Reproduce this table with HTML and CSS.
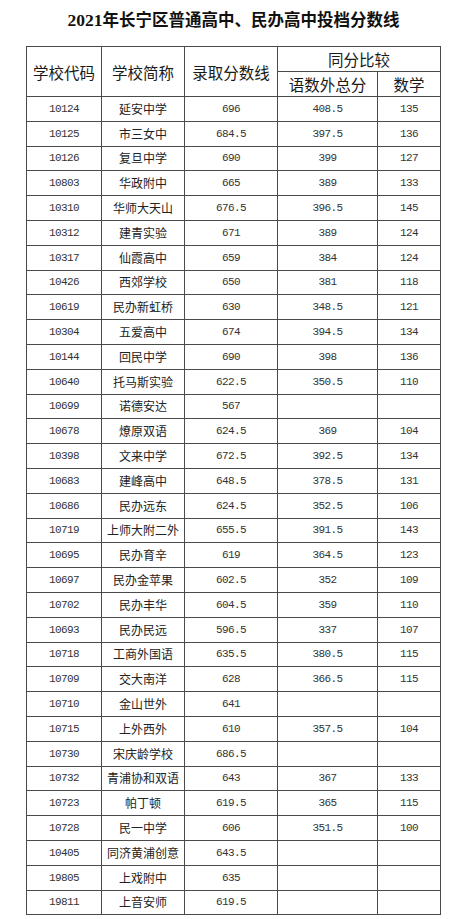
FILE: index.html
```html
<!DOCTYPE html>
<html lang="zh-CN">
<head>
<meta charset="utf-8">
<title>2021年长宁区普通高中、民办高中投档分数线</title>
<link rel="stylesheet" href="styles.css">
</head>
<body>
<div class="page">
  <h1 class="title"><span class="yr">2021</span>年长宁区普通高中、民办高中投档分数线</h1>
  <table class="scores">
    <colgroup>
      <col class="c1"><col class="c2"><col class="c3"><col class="c4"><col class="c5">
    </colgroup>
    <thead>
      <tr class="h1">
        <th rowspan="2">学校代码</th>
        <th rowspan="2">学校简称</th>
        <th rowspan="2">录取分数线</th>
        <th colspan="2">同分比较</th>
      </tr>
      <tr class="h2">
        <th>语数外总分</th>
        <th>数学</th>
      </tr>
    </thead>
    <tbody>
      <tr><td class="num">10124</td><td class="name">延安中学</td><td class="num">696</td><td class="num">408.5</td><td class="num">135</td></tr>
      <tr><td class="num">10125</td><td class="name">市三女中</td><td class="num">684.5</td><td class="num">397.5</td><td class="num">136</td></tr>
      <tr><td class="num">10126</td><td class="name">复旦中学</td><td class="num">690</td><td class="num">399</td><td class="num">127</td></tr>
      <tr><td class="num">10803</td><td class="name">华政附中</td><td class="num">665</td><td class="num">389</td><td class="num">133</td></tr>
      <tr><td class="num">10310</td><td class="name">华师大天山</td><td class="num">676.5</td><td class="num">396.5</td><td class="num">145</td></tr>
      <tr><td class="num">10312</td><td class="name">建青实验</td><td class="num">671</td><td class="num">389</td><td class="num">124</td></tr>
      <tr><td class="num">10317</td><td class="name">仙霞高中</td><td class="num">659</td><td class="num">384</td><td class="num">124</td></tr>
      <tr><td class="num">10426</td><td class="name">西郊学校</td><td class="num">650</td><td class="num">381</td><td class="num">118</td></tr>
      <tr><td class="num">10619</td><td class="name">民办新虹桥</td><td class="num">630</td><td class="num">348.5</td><td class="num">121</td></tr>
      <tr><td class="num">10304</td><td class="name">五爱高中</td><td class="num">674</td><td class="num">394.5</td><td class="num">134</td></tr>
      <tr><td class="num">10144</td><td class="name">回民中学</td><td class="num">690</td><td class="num">398</td><td class="num">136</td></tr>
      <tr><td class="num">10640</td><td class="name">托马斯实验</td><td class="num">622.5</td><td class="num">350.5</td><td class="num">110</td></tr>
      <tr><td class="num">10699</td><td class="name">诺德安达</td><td class="num">567</td><td class="num"></td><td class="num"></td></tr>
      <tr><td class="num">10678</td><td class="name">燎原双语</td><td class="num">624.5</td><td class="num">369</td><td class="num">104</td></tr>
      <tr><td class="num">10398</td><td class="name">文来中学</td><td class="num">672.5</td><td class="num">392.5</td><td class="num">134</td></tr>
      <tr><td class="num">10683</td><td class="name">建峰高中</td><td class="num">648.5</td><td class="num">378.5</td><td class="num">131</td></tr>
      <tr><td class="num">10686</td><td class="name">民办远东</td><td class="num">624.5</td><td class="num">352.5</td><td class="num">106</td></tr>
      <tr><td class="num">10719</td><td class="name">上师大附二外</td><td class="num">655.5</td><td class="num">391.5</td><td class="num">143</td></tr>
      <tr><td class="num">10695</td><td class="name">民办育辛</td><td class="num">619</td><td class="num">364.5</td><td class="num">123</td></tr>
      <tr><td class="num">10697</td><td class="name">民办金苹果</td><td class="num">602.5</td><td class="num">352</td><td class="num">109</td></tr>
      <tr><td class="num">10702</td><td class="name">民办丰华</td><td class="num">604.5</td><td class="num">359</td><td class="num">110</td></tr>
      <tr><td class="num">10693</td><td class="name">民办民远</td><td class="num">596.5</td><td class="num">337</td><td class="num">107</td></tr>
      <tr><td class="num">10718</td><td class="name">工商外国语</td><td class="num">635.5</td><td class="num">380.5</td><td class="num">115</td></tr>
      <tr><td class="num">10709</td><td class="name">交大南洋</td><td class="num">628</td><td class="num">366.5</td><td class="num">115</td></tr>
      <tr><td class="num">10710</td><td class="name">金山世外</td><td class="num">641</td><td class="num"></td><td class="num"></td></tr>
      <tr><td class="num">10715</td><td class="name">上外西外</td><td class="num">610</td><td class="num">357.5</td><td class="num">104</td></tr>
      <tr><td class="num">10730</td><td class="name">宋庆龄学校</td><td class="num">686.5</td><td class="num"></td><td class="num"></td></tr>
      <tr><td class="num">10732</td><td class="name">青浦协和双语</td><td class="num">643</td><td class="num">367</td><td class="num">133</td></tr>
      <tr><td class="num">10723</td><td class="name">帕丁顿</td><td class="num">619.5</td><td class="num">365</td><td class="num">115</td></tr>
      <tr><td class="num">10728</td><td class="name">民一中学</td><td class="num">606</td><td class="num">351.5</td><td class="num">100</td></tr>
      <tr><td class="num">10405</td><td class="name">同济黄浦创意</td><td class="num">643.5</td><td class="num"></td><td class="num"></td></tr>
      <tr><td class="num">19805</td><td class="name">上戏附中</td><td class="num">635</td><td class="num"></td><td class="num"></td></tr>
      <tr><td class="num">19811</td><td class="name">上音安师</td><td class="num">619.5</td><td class="num"></td><td class="num"></td></tr>
    </tbody>
  </table>
</div>
</body>
</html>
```

FILE: styles.css
```css
html, body {
  margin: 0;
  padding: 0;
  background: #ffffff;
}

.page {
  width: 415px;
  padding-left: 26px;
}

.title {
  margin: 0;
  height: 46px;
  padding-top: 10px;
  box-sizing: border-box;
  text-align: center;
  font-family: "Liberation Serif", "Noto Sans CJK SC", serif;
  font-size: 16.5px;
  line-height: 20px;
  font-weight: 700;
  color: #111;
  white-space: nowrap;
}

.title .yr {
  font-size: 17.5px;
}

.scores {
  border-collapse: collapse;
  table-layout: fixed;
  width: 415px;
  font-family: "Noto Sans CJK SC", sans-serif;
  color: #111;
}

.scores .c1 { width: 75px; }
.scores .c2 { width: 83px; }
.scores .c3 { width: 93px; }
.scores .c4 { width: 100px; }
.scores .c5 { width: 63px; }

.scores th,
.scores td {
  border: 1px solid #4a4a4a;
  padding: 0;
  text-align: center;
  vertical-align: middle;
  white-space: nowrap;
  overflow: hidden;
}

.scores th {
  font-weight: 400;
  font-size: 15.5px;
  line-height: 18px;
  color: #1a1a1a;
}

.scores .h1 { height: 24.5px; }
.scores .h2 { height: 25.5px; }

.scores tbody tr { height: 24.8px; }

.scores td {
  line-height: 14px;
}

.scores .name {
  font-size: 12px;
  color: #222;
}

.scores .num {
  font-family: "Liberation Mono", "DejaVu Sans Mono", monospace;
  font-size: 11px;
  letter-spacing: -0.6px;
  color: #333;
}
```
